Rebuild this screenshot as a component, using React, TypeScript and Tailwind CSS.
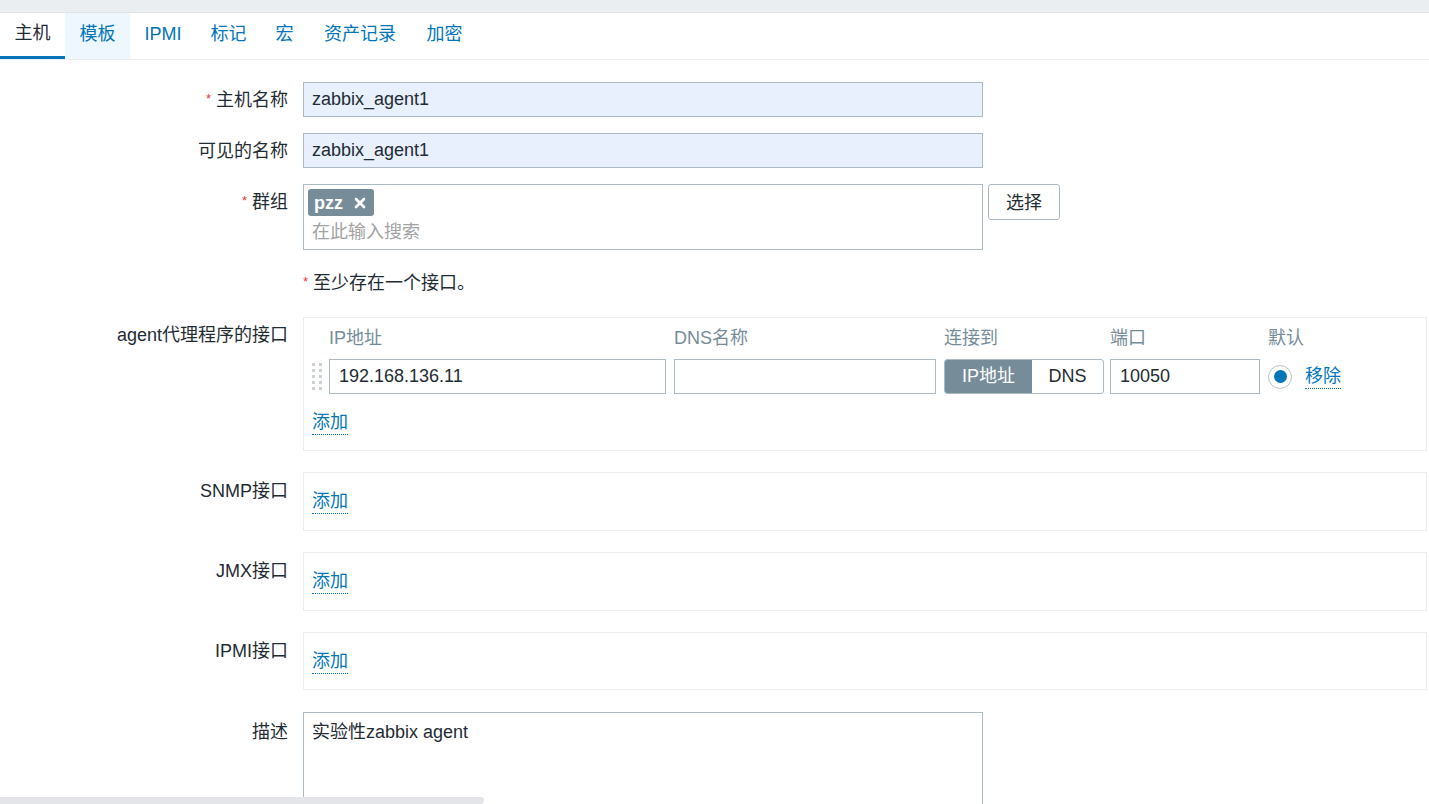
import React from "react";

const FONT = { fontFamily: '"Liberation Sans", Arial, "Noto Sans CJK SC", sans-serif' };

function Req() {
  return <span className="text-[#e33734] text-[13px] mr-[5px] relative top-[-3px] leading-none">*</span>;
}

function Label({ children, req, pt = "pt-[6px]" }: { children: React.ReactNode; req?: boolean; pt?: string }) {
  return (
    <div className={"w-[288px] shrink-0 " + pt}>
      <div className="h-[24px] leading-[24px] text-right text-[#1f2c33] whitespace-nowrap">
        {req && <Req />}
        {children}
      </div>
    </div>
  );
}

function Link({ children }: { children: React.ReactNode }) {
  return (
    <span className="text-[#0275b8] border-b border-dotted border-[#0275b8] h-[24px] leading-[23px] inline-block align-top">
      {children}
    </span>
  );
}

function Handle() {
  return (
    <div className="w-[17px] shrink-0 h-[35px] flex items-center">
      <div className="grid grid-cols-2 gap-x-[4px] gap-y-[3px] w-[10px]">
        {Array.from({ length: 10 }).map((_, i) => (
          <div key={i} className="w-[3px] h-[3px] bg-[#c9d2d7]" />
        ))}
      </div>
    </div>
  );
}

function InterfaceBox({ label, h }: { label: string; h: string }) {
  return (
    <div className="flex mt-[21px]">
      <Label pt="pt-[7px]">{label}</Label>
      <div className={"ml-[15px] w-[1124px] border border-[#ebeef0] pl-[8px] pt-[17px] " + h}>
        <Link>添加</Link>
      </div>
    </div>
  );
}

export default function App() {
  const tabs = ["主机", "模板", "IPMI", "标记", "宏", "资产记录", "加密"];
  return (
    <div className="w-[1429px] h-[804px] overflow-hidden bg-white text-[18px] relative" style={FONT}>
      <div className="h-[12px] bg-[#ebeef0] border-b border-[#dfe4e7] box-content" />
      <div className="flex h-[46px] border-b border-[#ebeef0] box-content">
        {tabs.map((t, i) => (
          <div
            key={t}
            className={
              "px-[14.5px] flex items-center h-[46px] pb-[3px] " +
              (i === 0
                ? "text-[#1f2c33] border-b-[3px] border-[#0275b8] pb-0"
                : i === 1
                ? "text-[#0275b8] bg-[#eef7fd] h-[44px]"
                : i === 5
                ? "text-[#0275b8] pl-[16px] pr-[16px]"
                : "text-[#0275b8]")
            }
          >
            {t}
          </div>
        ))}
      </div>

      <div className="pt-[22px]">
        <div className="flex">
          <Label req>主机名称</Label>
          <div className="ml-[15px] w-[680px] h-[35px] border border-[#acbbc2] bg-[#e8f0fe] pl-[8px] flex items-center text-[#1f2c33]">
            zabbix_agent1
          </div>
        </div>
        <div className="flex mt-[16px]">
          <Label>可见的名称</Label>
          <div className="ml-[15px] w-[680px] h-[35px] border border-[#acbbc2] bg-[#e8f0fe] pl-[8px] flex items-center text-[#1f2c33]">
            zabbix_agent1
          </div>
        </div>
        <div className="flex mt-[16px]">
          <Label req>群组</Label>
          <div className="ml-[15px] w-[680px] h-[66px] border border-[#acbbc2] pl-[4px] pt-[4px]">
            <div className="inline-flex items-center h-[27px] bg-[#768d99] rounded-[3px] pl-[6px] pr-[8px] text-white font-bold leading-none">
              <span>pzz</span>
              <svg className="ml-[11px]" width="12" height="12" viewBox="0 0 12 12">
                <path d="M2 2 L10 10 M10 2 L2 10" stroke="white" strokeWidth="2.6" strokeLinecap="round" />
              </svg>
            </div>
            <div className="pl-[4px] text-[#a3a3a3] h-[24px] leading-[24px] mt-[3px]">在此输入搜索</div>
          </div>
          <div className="ml-[5px] w-[72px] h-[36px] border border-[#acbbc2] rounded-[3px] flex items-center justify-center text-[#1f2c33] pt-[2px]">
            选择
          </div>
        </div>
        <div className="flex mt-[21px] h-[24px]">
          <div className="w-[288px] shrink-0" />
          <div className="ml-[15px] h-[24px] leading-[24px] text-[#1f2c33]">
            <Req />
            至少存在一个接口。
          </div>
        </div>

        <div className="flex mt-[22px]">
          <Label>agent代理程序的接口</Label>
          <div className="ml-[15px] w-[1124px] h-[134px] border border-[#ebeef0] pl-[8px] pt-[8px]">
            <div className="flex text-[#768d99] h-[24px] leading-[24px]">
              <div className="w-[17px]" />
              <div className="w-[345px]">IP地址</div>
              <div className="w-[270px]">DNS名称</div>
              <div className="w-[166px]">连接到</div>
              <div className="w-[158px]">端口</div>
              <div>默认</div>
            </div>
            <div className="flex items-center mt-[9px] mb-[17px] h-[35px]">
              <Handle />
              <div className="w-[337px] h-[35px] border border-[#acbbc2] pl-[9px] flex items-center text-[#1f2c33]">
                192.168.136.11
              </div>
              <div className="ml-[8px] w-[262px] h-[35px] border border-[#acbbc2]" />
              <div className="ml-[8px] w-[160px] h-[35px] border border-[#acbbc2] rounded-[3px] flex overflow-hidden">
                <div className="w-[87px] bg-[#768d99] text-white flex items-center justify-center">IP地址</div>
                <div className="flex-1 flex items-center justify-center text-[#1f2c33]">DNS</div>
              </div>
              <div className="ml-[6px] w-[150px] h-[35px] border border-[#acbbc2] pl-[9px] flex items-center text-[#1f2c33]">
                10050
              </div>
              <div className="ml-[8px] w-[24px] h-[24px] rounded-full border border-[#b8c4ca] flex items-center justify-center">
                <div className="w-[13px] h-[13px] rounded-full bg-[#0275b8]" />
              </div>
              <div className="ml-[13px] h-[24px]">
                <Link>移除</Link>
              </div>
            </div>
            <Link>添加</Link>
          </div>
        </div>

        <InterfaceBox label="SNMP接口" h="h-[59px]" />
        <InterfaceBox label="JMX接口" h="h-[59px]" />
        <InterfaceBox label="IPMI接口" h="h-[58px]" />

        <div className="flex mt-[22px]">
          <Label pt="pt-[8px]">描述</Label>
          <div className="ml-[15px] w-[680px] h-[130px] border border-[#acbbc2] pl-[8px] pt-[7px]">
            <div className="h-[24px] leading-[24px] text-[#1f2c33]">实验性zabbix agent</div>
          </div>
        </div>
      </div>

      <div className="absolute left-0 bottom-0 w-[484px] h-[7px] bg-[#e3e5e8] rounded-r-[3px]" />
    </div>
  );
}
